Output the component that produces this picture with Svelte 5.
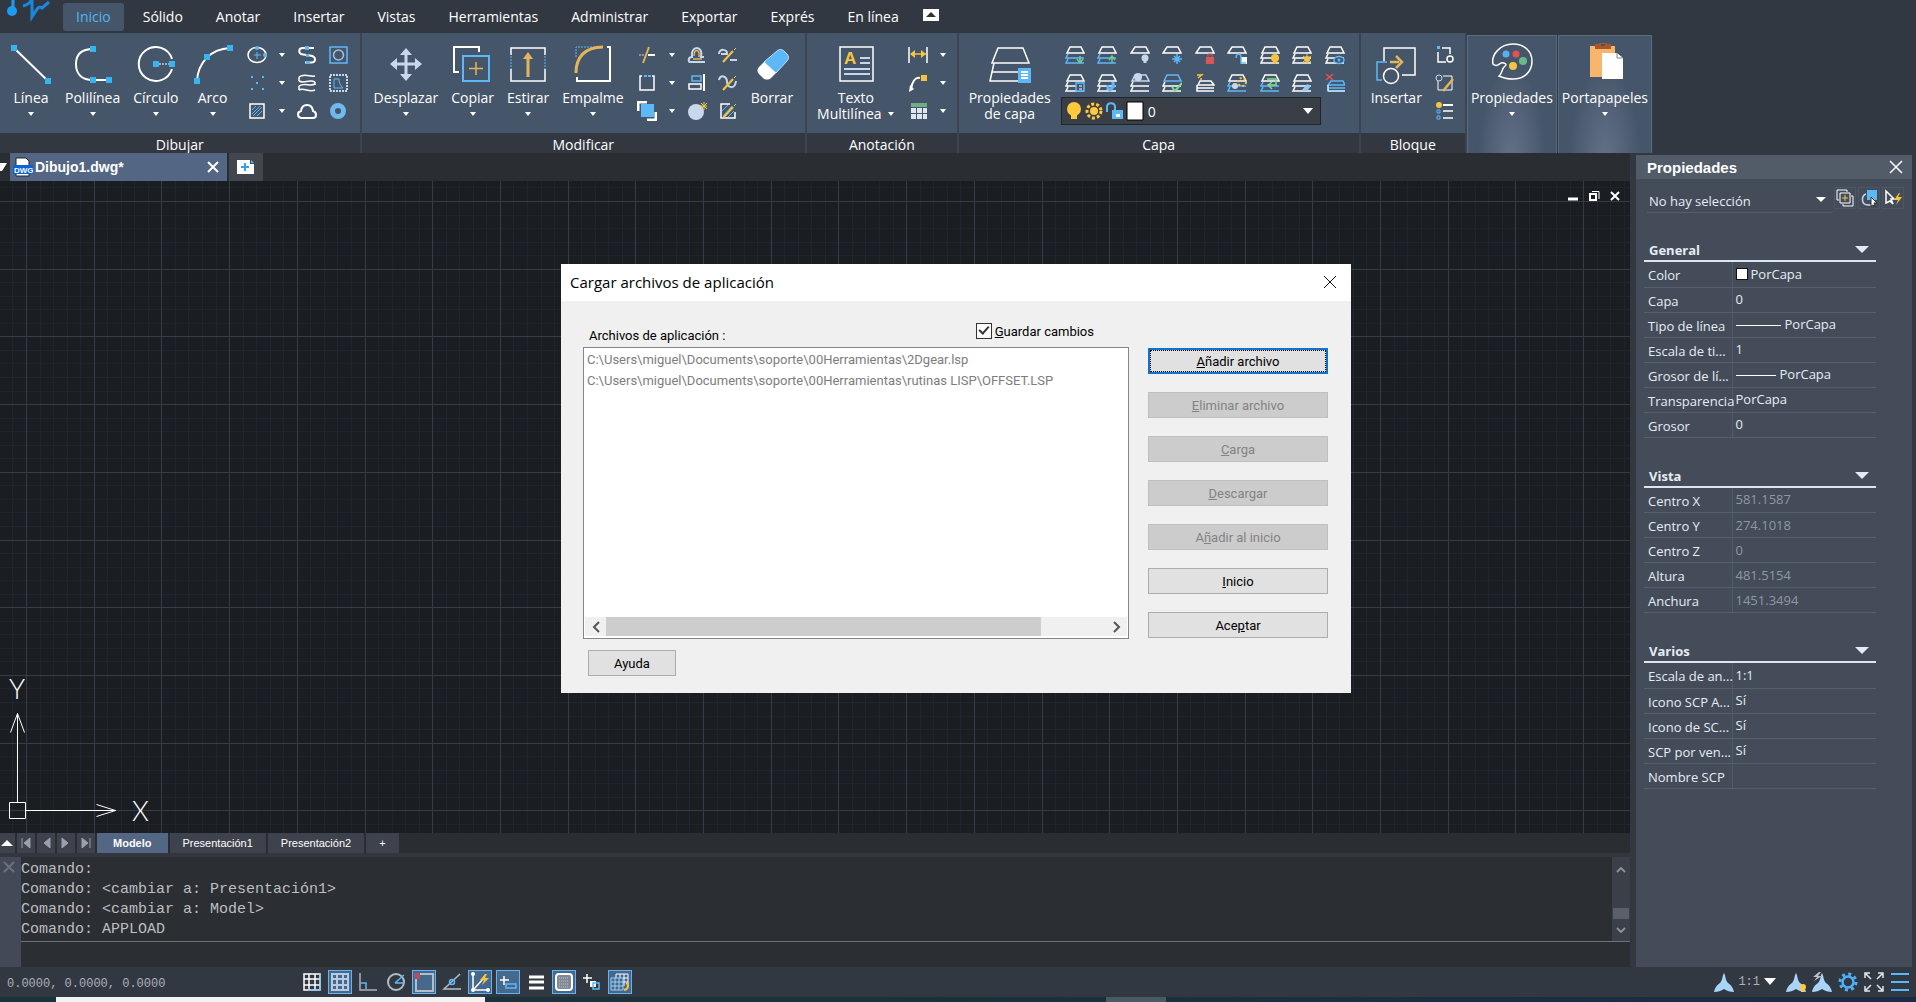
<script>
  let activeMenu = 'Inicio';
  let activeLayout = 'Modelo';
  let saveChanges = true;

  const menus = ['Inicio', 'Sólido', 'Anotar', 'Insertar', 'Vistas', 'Herramientas', 'Administrar', 'Exportar', 'Exprés', 'En línea'];

  const W = '#ffffff';
  const B = '#5db8f8';
  const Y = '#f5c542';
  const G = '#e3b45c';
  const L = '#c9d7ea';

  // large ribbon icons, 42x42
  const big = {
    line: `<path d="M4 5 38 38" stroke="${W}" stroke-width="2"/><path d="M1 2h6v6H1zM35 35h6v6h-6z" fill="#36b6f0"/>`,
    polyline: `<path d="M21 6C10 6 4 11 4 21s6 16 17 16h15" stroke="${W}" stroke-width="2"/><path d="M18 3h6v6h-6zM18 34h6v6h-6zM34 34h6v6h-6z" fill="#36b6f0"/>`,
    circle: `<path d="M37 16A17 17 0 1 0 37 26" stroke="${W}" stroke-width="2"/><path d="M24 21h10" stroke="${W}" stroke-dasharray="2 1"/><path d="M18 18h6v6h-6zM34 18h6v6h-6z" fill="#36b6f0"/>`,
    arc: `<path d="M5 38C6 20 18 6 38 5" stroke="${W}" stroke-width="2"/><path d="M2 35h6v6H2zM12 11h6v6h-6zM35 2h6v6h-6z" fill="#36b6f0"/>`,
    move: `<path d="M21 9v25M9 21h25" stroke="${L}" stroke-width="3"/><path d="m21 5 6 7H15zM21 38l6-7H15zM5 21l7-6v12zM37 21l-7-6v12z" fill="${L}"/>`,
    copy: `<path d="M7 29H2V4h25v5" stroke="${W}" stroke-width="2"/><path d="M11 13h26v25H11z" stroke="${B}" stroke-width="2"/><path d="M24 19v13M17 25.500h14" stroke="${G}" stroke-width="1.500"/>`,
    stretch: `<path d="M4 12V5h34v7M4 26v12h34V26" stroke="${W}" stroke-width="1.500"/><path d="M4 13v13M38 13v13" stroke="${B}" stroke-dasharray="2 1"/><path d="M21 34V15" stroke="${G}" stroke-width="3"/><path d="m21 9 5 7H16z" fill="${G}"/>`,
    fillet: `<path d="M35 4h3v34H5v-4" stroke="${W}" stroke-width="2"/><path d="M4 14V4h18" stroke="${B}" stroke-dasharray="2 1"/><path d="M4 30C4 15 12 4 31 4" stroke="${G}" stroke-width="3"/>`,
    erase: `<path d="M26 8c2-2 5-2 7 0l3 3c2 2 2 5 0 7L25 30 13 19z" fill="${B}" stroke="#bfe0fa"/><path d="m13 19 12 11-5 5c-2 2-6 2-8 0l-4-4c-2-2-2-5 0-7z" fill="${W}"/>`,
    mtext: `<path d="M5 4h33v34H5z" stroke="${W}" stroke-width="1.500"/><path d="M25 15h10M25 20h10M9 26h26M9 31h26" stroke="${L}" stroke-width="2"/><text x="9" y="21" font-family="Liberation Sans" font-size="17" font-weight="700" fill="${Y}">A</text>`,
    layers: `<path d="M9 5h25l6 15H3zM5 20l-2 9h28M3 29l-2 9h28" stroke="${W}" stroke-width="1.500"/><path d="M29 25h13v15H29z" fill="${B}"/><path d="M32 29h7M32 32h7M32 35h7" stroke="${W}" stroke-width="2"/>`,
    insert: `<path d="M9 18V5h31v27H27" stroke="${W}" stroke-width="1.500"/><path d="M12 19H2v18h5" stroke="${B}" stroke-width="1.500"/><path d="M15 19h9" stroke="${G}" stroke-width="2.500"/><path d="m21 13 6 6-6 6" stroke="${G}" stroke-width="2.500"/><circle cx="16" cy="33" r="7.500" stroke="${W}" stroke-width="1.500"/>`,
    palette: `<path d="M8 33c4-3 2-7 6-10 3-2-2-4-4-3-3 2-5 4-8 1C0 12 9 1 22 1c11 0 19 7 19 17 0 11-8 18-19 18-6 0-10-1-14-3z" stroke="${W}" stroke-width="1.500"/><circle cx="15" cy="11" r="3.500" fill="#59aef2"/><circle cx="25" cy="11" r="3.500" fill="#e8504f"/><circle cx="32" cy="18" r="4" fill="#68b98a"/><circle cx="22" cy="23" r="4" fill="${Y}"/>`,
    paste: `<path d="M6 3h25v31H6z" fill="#f7b66b"/><path d="M11 6V1h4v-1h8v1h4v5z" fill="#a9562a"/><path d="M17 1h4v2h-4z" fill="#46566a"/><path d="M18 10h15l6 5v21H18z" fill="${W}"/><path d="M33 10v5h6" stroke="#7a8594"/>`,
  };

  const base = (top, bottom) => `<path d="M5 2h11l3 6H2z" stroke="${top}" stroke-width="1.500"/><path d="M3 9l-2 4h18M3 14l-2 4h18" stroke="${bottom}" stroke-width="1.500"/>`;
  const single = `<path d="M5 2h11l3 6H1z" stroke="${W}" stroke-width="1.500"/>`;
  const pencil = `<path d="M5 17 15 6" stroke="${Y}" stroke-width="2"/><path d="m16 5 2-2" stroke="${Y}"/>`;

  // small ribbon icons, 20x20
  const small = {
    ellipse: `<ellipse cx="10" cy="10" rx="9" ry="7.500" stroke="${W}" stroke-width="1.500"/><path d="M10 7v7M7 10h7" stroke="${B}"/><circle cx="10" cy="3" r="2" fill="${B}"/><circle cx="18" cy="10" r="2" fill="${B}"/>`,
    spline: `<path d="M17 3H6C1 3 1 9 6 9.500l7 1c7 1 6 7 1 7H8" stroke="${W}" stroke-width="2"/><path d="M8 1h4v4H8zM9 9h3v3H9zM9 16h4v3H9z" fill="${B}"/>`,
    boundary: `<path d="M2 2h17v16H2z" stroke="${B}" stroke-width="1.500"/><circle cx="10.500" cy="10" r="5" stroke="#9cc2e2" stroke-width="1.500"/>`,
    points: `<path d="M4 3h2v2H4zM15 3h2v2h-2zM9 9h2v2H9zM4 15h2v2H4zM15 15h2v2h-2z" fill="${B}"/>`,
    bands: `<path d="M2 4c5-4 11 0 16-1M18 9C12 6 7 11 2 8M2 13c6-4 11 1 16-2M18 17C12 20 7 14 2 17M2 4v4M18 9v3M2 13v4" stroke="${W}" stroke-width="1.500"/>`,
    wipeout: `<path d="M2 2h17v16H2z" stroke="${L}" stroke-width="2" stroke-dasharray="2 1"/><path d="M6 15V6h5c0 4 1 6 4 9z" stroke="${B}"/>`,
    hatch: `<path d="M3 3h14v14H3z" stroke="${W}" stroke-width="1.500"/><path d="m5 9 4-4M5 13l8-8M6 15l9-9M10 15l5-5" stroke="${B}"/>`,
    cloud: `<path d="M4 17c-4-1-4-6 0-7 1-8 11-8 12 0 4 1 4 7 0 7z" stroke="${W}" stroke-width="2"/>`,
    donut: `<circle cx="10" cy="10" r="5.500" stroke="#6fb9ef" stroke-width="5"/>`,
    trim: `<path d="M11 10h7" stroke="${W}" stroke-width="2"/><path d="M2 10h6" stroke="${L}" stroke-dasharray="2 1"/><path d="M6 18 12 2" stroke="${G}" stroke-width="2"/>`,
    offset: `<path d="M18 17H3c-2 0-2-5 2-5C3 0 17 0 14 12h3" stroke="${L}" stroke-width="2"/><path d="M6 14h9M7 11c0-8 6-7 5 1" stroke="${G}" stroke-width="1.500"/>`,
    editPoly: `<path d="M1 9c0-6 9-5 8 0H3M12 15h7" stroke="${L}" stroke-width="2"/>${pencil}`,
    brk: `<path d="M5 3H3v14h14V3h-2" stroke="${W}" stroke-width="1.500"/><path d="M7 3h7" stroke="${B}" stroke-dasharray="3 1" stroke-width="2"/>`,
    align: `<path d="M17 1v17" stroke="${W}" stroke-width="2"/><path d="M5 3h9v5H5z" stroke="${B}" stroke-width="1.500"/><path d="M2 11h12v5H2z" stroke="${W}" stroke-width="1.500"/>`,
    editSpline: `<path d="M1 7c1-6 8-4 8 2s8 8 9-1" stroke="${L}" stroke-width="2"/>${pencil}`,
    order: `<path d="M1 10V1h9M19 11v8h-9" stroke="${W}" stroke-width="3"/><path d="M4 3h13v13H4z" fill="${B}"/>`,
    region: `<circle cx="9" cy="11" r="8" fill="${L}"/><path d="M17 1v8M13 5h7M14 2l6 6M20 2l-6 6" stroke="${Y}"/>`,
    editHatch: `<path d="M12 3H3v14h14v-6" stroke="${W}" stroke-width="1.500"/><path d="m4 10 6-6M5 15 14 5M10 16l6-6" stroke="${B}"/>${pencil}`,
    dim: `<path d="M1 2v16M19 2v16" stroke="${W}" stroke-width="1.500"/><path d="M3 9h15" stroke="${Y}" stroke-width="1.500"/><path d="m2 9 5-4v8zM18 9l-5-4v8z" fill="${Y}"/>`,
    leader: `<path d="M3 16C4 9 7 4 12 5" stroke="${W}" stroke-width="2"/><path d="m1 19 1-7 4 4z" fill="${W}"/><path d="M13 2h6v6h-6z" fill="${Y}"/>`,
    table: `<path d="M3 2h16v4H3z" fill="#6fae83"/><path d="M3 7h5v5H3zM9 7h5v5H9zM15 7h4v5h-4zM3 13h5v5H3zM9 13h5v5H9zM15 13h4v5h-4z" fill="#dfe5ee"/>`,
    blk: `<path d="M7 3h8v6M3 7v10h8" stroke="${W}" stroke-width="1.500"/><path d="M2 1h3v3H2z" fill="${B}"/><circle cx="15" cy="14" r="3" stroke="${W}" stroke-width="1.500"/>`,
    blkEdit: `<path d="M8 3h9v14H3V8" stroke="${W}"/><circle cx="4" cy="5" r="3" stroke="${L}"/><path d="M8 18 18 6" stroke="${G}" stroke-width="2.500"/>`,
    blkList: `<path d="M8 4h10" stroke="${W}" stroke-width="2"/><path d="M8 10h10M8 17h10" stroke="${W}" stroke-width="1.500"/><circle cx="4" cy="4" r="3" fill="${Y}"/><path d="M2 9h3v3H2zM2 15h3v3H2z" stroke="${B}"/>`,
  };

  const layerTools = [
    base(W, B) + `<path d="M15 11v6M12 14l3 4 3-4" stroke="#6fc98c" stroke-width="1.500"/>`,
    base(W, B) + `<path d="M15 18v-6M12 15l3-4 3 4" stroke="#6fc98c" stroke-width="1.500"/>`,
    single + `<path d="M15 10v8" stroke="${L}" stroke-width="3"/><circle cx="15" cy="13" r="3.500" fill="${L}"/>`,
    single + `<path d="M15 9v10M10 14h10M12 11l6 6M18 11l-6 6" stroke="${B}" stroke-width="1.500"/>`,
    single + `<path d="M11 12h8v7h-8z" fill="#d9575b"/><path d="M13 12V9h4v3" stroke="#d9575b"/>`,
    single + `<path d="M14 12h6v7h-6z" fill="${W}"/><path d="M9 13c0-5 5-5 5-1v6h5" stroke="${B}" stroke-width="1.500"/>`,
    base(W, W) + `<circle cx="15" cy="13" r="4" fill="${Y}"/><path d="M15 10v9" stroke="${Y}" stroke-width="3"/>`,
    base(W, W) + `<circle cx="15" cy="14" r="3" fill="${Y}"/><path d="M15 9v10M11 11l8 6M19 11l-8 6" stroke="${Y}"/>`,
    base(W, W) + `<ellipse cx="14" cy="15" rx="5" ry="3.500" fill="#46566a" stroke="${B}" stroke-width="1.500"/><circle cx="14" cy="15" r="1.500" fill="${B}"/>`,
    base(W, W) + `<path d="M11 10h8v8h-8z" fill="#46566a" stroke="${B}" stroke-width="1.500"/><path d="M14 13h3M14 16h3" stroke="${W}"/>`,
    base(W, W) + `<path d="M11 17v-5M16 15V9M12 18l6-6" stroke="${B}" stroke-width="3"/>`,
    base(L, W) + `<circle cx="8" cy="4" r="4" fill="${L}"/>`,
    base(B, W) + `<path d="m10 14 3 4 7-8" stroke="#7fdc8f" stroke-width="2"/>`,
    `<path d="M5 8h11l3 4H3zM2 12v6h17M2 15h17" stroke="${W}" stroke-width="1.500"/><path d="M2 2h5M3 5l5-4M5 6h2" stroke="${Y}" stroke-width="1.500"/>`,
    base(W, B) + `<circle cx="15" cy="9" r="4" stroke="${Y}" stroke-width="2" stroke-dasharray="2 2"/><circle cx="8" cy="13" r="3" fill="${L}"/>`,
    base(W, B) + `<path d="M7 6h9v6H9M12 9l-4 3 4 4" stroke="#7fdc8f" stroke-width="1.500"/>`,
    base(W, W) + `<path d="M10 17l5-6 4 2-4 5z" fill="#8fc6f4"/>`,
    `<path d="M6 8h12l2 4H3zM3 12v6h17M3 15h17" stroke="${B}" stroke-width="1.500"/><path d="M3 12v6h17" stroke="${W}"/><path d="M1 1l7 6M8 1 1 7" stroke="#e8504f" stroke-width="1.500"/>`,
  ];

  const drawBig = [['Línea', 'line'], ['Polilínea', 'polyline'], ['Círculo', 'circle'], ['Arco', 'arc']];
  const drawSmall = ['ellipse', '', 'spline', 'boundary', 'points', '', 'bands', 'wipeout', 'hatch', '', 'cloud', 'donut'];
  const modBig = [['Desplazar', 'move'], ['Copiar', 'copy'], ['Estirar', 'stretch'], ['Empalme', 'fillet']];
  const modSmall = ['trim', '', 'offset', 'editPoly', 'brk', '', 'align', 'editSpline', 'order', '', 'region', 'editHatch'];
  const noteSmall = ['dim', '', 'leader', '', 'table', ''];
  const blockSmall = ['blk', 'blkEdit', 'blkList'];

  const groups = [
    {
      title: 'General',
      rows: [
        ['Color', 'PorCapa', 'swatch'],
        ['Capa', '0'],
        ['Tipo de línea', 'PorCapa', 'long'],
        ['Escala de ti...', '1'],
        ['Grosor de lí...', 'PorCapa', 'short'],
        ['Transparencia', 'PorCapa'],
        ['Grosor', '0'],
      ],
    },
    {
      title: 'Vista',
      readonly: true,
      rows: [['Centro X', '581.1587'], ['Centro Y', '274.1018'], ['Centro Z', '0'], ['Altura', '481.5154'], ['Anchura', '1451.3494']],
    },
    {
      title: 'Varios',
      rows: [['Escala de an...', '1:1'], ['Icono SCP A...', 'Sí'], ['Icono de SC...', 'Sí'], ['SCP por ven...', 'Sí'], ['Nombre SCP', '']],
    },
  ];

  const layouts = ['Modelo', 'Presentación1', 'Presentación2'];
  const navIcons = ['M5 4v10M13 4 7 9l6 5z', 'M13 4 7 9l6 5z', 'M5 4l6 5-6 5z', 'M5 4l6 5-6 5zM13 4v10'];
  const history = ['Comando:', 'Comando: <cambiar a: Presentación1>', 'Comando: <cambiar a: Model>', 'Comando: APPLOAD'];

  const statusTools = [
    { on: false, svg: `<path d="M4 4h16v16H4zM9 4v16M15 4v16M4 9h16M4 15h16" stroke="${W}" stroke-width="1.500"/><path d="M20 4v16H8" stroke="${B}"/>` },
    { on: true, svg: `<path d="M4 4h16v16H4zM9 4v16M15 4v16M4 9h16M4 15h16" stroke="#b9cbe0" stroke-width="2"/>` },
    { on: false, svg: `<path d="M4 3v17h17" stroke="#a9b1bd" stroke-width="1.500"/><path d="M5 13h5v6" stroke="${B}" stroke-width="1.500"/>` },
    { on: false, svg: `<circle cx="12" cy="12" r="8" stroke="#b4bcc8" stroke-width="2"/><path d="M11 13l9-8M11 13h9" stroke="${B}" stroke-width="1.500"/>` },
    { on: true, svg: `<path d="M4 4h17v17H4z" stroke="#b6bcc6" stroke-width="2"/><path d="M2 3h6v6H2z" fill="#a9506a"/>` },
    { on: false, svg: `<path d="M20 4 4 19h17" stroke="#b4bcc8" stroke-width="1.500"/><circle cx="12" cy="12" r="2.500" stroke="${B}" stroke-width="1.500"/>` },
    { on: true, svg: `<path d="M5 4v16h15M6 19 15 9" stroke="${W}" stroke-width="1.500"/><circle cx="5" cy="4" r="2" fill="${W}"/><circle cx="5" cy="20" r="2" fill="${W}"/><circle cx="20" cy="20" r="2" fill="${W}"/><path d="m17 4-5 6h4l-2 5 7-7h-4l2-4z" fill="${Y}"/>` },
    { on: true, svg: `<path d="M8 6v9M4 10h9" stroke="${W}" stroke-width="1.500"/><path d="M10 14h10v4H10z" stroke="${B}" stroke-width="1.500"/>` },
    { on: false, svg: `<path d="M5 7h15M5 12h15M5 18h15" stroke="${W}" stroke-width="3"/>` },
    { on: true, svg: `<rect x="4" y="4" width="16" height="16" rx="3" fill="#7f8894" stroke="${W}" stroke-width="2"/><path d="M7 8h10M7 11h10M7 14h10M7 17h10" stroke="#c3cad4" stroke-dasharray="1 1"/>` },
    { on: false, svg: `<path d="M7 4v9M3 8h9" stroke="${W}" stroke-width="1.500"/><path d="M10 11h6v6h-6z" fill="${W}"/><path d="M13 13h6v6h-6z" stroke="${B}" stroke-width="1.500"/>` },
    { on: true, svg: `<path d="M8 4h12v10M12 4v4M16 4v12M8 4v4M15 8h5M15 12h5" stroke="${W}"/><path d="M3 8h12v12H3zM7 8v12M11 8v12M3 12h12M3 16h12" stroke="#9fd0f5"/><path d="M16 20c5-1 5-6 2-7" stroke="${Y}" stroke-width="2"/>` },
  ];

  const blade = 'M10 1c2 3 1 7 4 10 4 3 5 5 6 9-4 0-7-1-10-3-3 2-6 3-10 3 1-4 2-6 6-9 3-3 2-7 4-10z';

  const dialogButtons = [
    ['', 'A', 'ñadir archivo', false],
    ['', 'E', 'liminar archivo', true],
    ['', 'C', 'arga', true],
    ['', 'D', 'escargar', true],
    ['A', 'ñ', 'adir al inicio', true],
    ['', 'I', 'nicio', false],
    ['Ace', 'p', 'tar', false],
  ];

  // drawing grid: a major line every 68 px or so, five minor cells in each
  const step = 67.7;
  function gridPath(minor) {
    let d = '';
    const n = minor ? 5 : 1;
    for (let i = -2 * n; i < 60 * n; i++) {
      if (minor && i % 5 === 0) continue;
      d += `M${Math.round(26 + (i * step) / n) + 0.5} 0V3000M0 ${Math.round(20 + (i * step) / n) + 0.5}H4000`;
    }
    return d;
  }
  const major = gridPath(false);
  const minor = gridPath(true);
</script>

{#snippet caret()}
  <svg class="caret" width="8" height="6" viewBox="0 0 8 6"><path d="M1 1h6L4 5z" fill="#fff" /></svg>
{/snippet}

{#snippet tool(label, icon, drop)}
  <button class="tool">
    <svg width="42" height="42" viewBox="0 0 42 42" fill="none">{@html big[icon]}</svg>
    <span>{label}</span>
    {#if drop}{@render caret()}{/if}
  </button>
{/snippet}

{#snippet smallTools(items)}
  {#each items as name}
    {#if name}
      <button class="mini" aria-label={name}><svg width="20" height="20" viewBox="0 0 20 20" fill="none">{@html small[name]}</svg></button>
    {:else}
      <button class="drop" aria-label="más">{@render caret()}</button>
    {/if}
  {/each}
{/snippet}

<div class="app">
  <nav class="menubar">
    <svg class="logo" width="50" height="33" viewBox="0 0 50 33" fill="none">
      <circle cx="12" cy="11" r="5" fill="#1d9bf0" />
      <path d="M13 0v10" stroke="#1d9bf0" stroke-width="3" />
      <path d="M23 6c4-1 7-3 8-6M32 0v17c4-6 6-12 10-9l7-6" stroke="#1a86e0" stroke-width="3" />
    </svg>
    {#each menus as m}
      <button class="menu" class:active={m === activeMenu} on:click={() => (activeMenu = m)}>{m}</button>
    {/each}
    <button class="fold" aria-label="Contraer">
      <svg width="18" height="14" viewBox="0 0 18 14"><rect x="1" y="1" width="16" height="12" fill="#fff" /><path d="M4 9h10L9 4z" fill="#333" /></svg>
    </button>
  </nav>

  <div class="ribbon">
    <section class="panel first">
      <div class="tools">
        {#each drawBig as [label, icon]}{@render tool(label, icon, true)}{/each}
        <div class="grid four">{@render smallTools(drawSmall)}</div>
      </div>
      <h2>Dibujar</h2>
    </section>
    <section class="panel">
      <div class="tools">
        {#each modBig as [label, icon]}{@render tool(label, icon, true)}{/each}
        <div class="grid four">{@render smallTools(modSmall)}</div>
        {@render tool('Borrar', 'erase', false)}
      </div>
      <h2>Modificar</h2>
    </section>
    <section class="panel tight">
      <div class="tools">
        <button class="tool">
          <svg width="42" height="42" viewBox="0 0 42 42" fill="none">{@html big.mtext}</svg>
          <span>Texto</span>
          <span class="line2">Multilínea {@render caret()}</span>
        </button>
        <div class="grid two">{@render smallTools(noteSmall)}</div>
      </div>
      <h2>Anotación</h2>
    </section>
    <section class="panel tight layer">
      <div class="tools">
        <button class="tool">
          <svg width="42" height="42" viewBox="0 0 42 42" fill="none">{@html big.layers}</svg>
          <span>Propiedades</span>
          <span class="line2">de capa</span>
        </button>
        <div class="layerbox">
          <div class="layergrid">
            {#each layerTools as svg}
              <button class="mini" aria-label="capa"><svg width="20" height="20" viewBox="0 0 20 20" fill="none">{@html svg}</svg></button>
            {/each}
          </div>
          <label class="combo">
            <svg width="84" height="26" viewBox="0 0 84 26" fill="none">
              <circle cx="12" cy="11" r="7" fill="#ffc83d" /><path d="M9 17h6v4H9z" fill="#ffc83d" />
              <circle cx="32" cy="13" r="4" fill="#ffc83d" /><circle cx="32" cy="13" r="7" stroke="#ffc83d" stroke-width="3" stroke-dasharray="3 2" />
              <path d="M45 14V9c0-5 8-5 8 0v5" stroke="#5db8f8" stroke-width="2" /><path d="M50 12h11v9H50z" fill="#5db8f8" /><path d="M54 16h4v3h-4z" fill="#fff" />
              <path d="M65 4h16v18H65z" fill="#fff" stroke="#000" />
            </svg>
            <select aria-label="Capa actual"><option>0</option></select>
            <svg class="arrow" width="12" height="6" viewBox="0 0 12 6"><path d="M1 0h10L6 6z" fill="#fff" /></svg>
          </label>
        </div>
      </div>
      <h2>Capa</h2>
    </section>
    <section class="panel tight">
      <div class="tools">
        {@render tool('Insertar', 'insert', false)}
        <div class="grid one">{@render smallTools(blockSmall)}</div>
      </div>
      <h2>Bloque</h2>
    </section>
    <div class="folded">{@render tool('Propiedades', 'palette', true)}</div>
    <div class="folded">{@render tool('Portapapeles', 'paste', true)}</div>
  </div>

  <div class="workspace">
    <main>
      <div class="doctabs">
        <button class="doclist" aria-label="Documentos"><svg width="8" height="10" viewBox="0 0 8 10"><path d="M0 1h7L2 9H0z" fill="#fff" /></svg></button>
        <div class="doctab">
          <svg width="20" height="20" viewBox="0 0 20 20"><path d="M3 1h10l3 3v15H3z" fill="#fff" stroke="#20262e" /><rect x="0" y="8" width="20" height="9" fill="#0a63d8" /><text x="1" y="16" font-family="Liberation Sans" font-size="8" font-weight="700" fill="#fff">DWG</text></svg>
          <b>Dibujo1.dwg*</b>
          <button aria-label="Cerrar"><svg width="12" height="12" viewBox="0 0 12 12"><path d="M1 1l10 10M11 1 1 11" stroke="#fff" stroke-width="2" /></svg></button>
        </div>
        <button class="newtab" aria-label="Nuevo"><svg width="20" height="16" viewBox="0 0 20 16"><path d="M1 1h13v4h4v10H1z" fill="#fff" /><path d="M15 1l3 3h-3z" fill="#5db8f8" /><path d="M9 4v8M5 8h8" stroke="#3a9fe8" stroke-width="2" /></svg></button>
      </div>

      <div class="canvas">
        <svg class="lines" width="100%" height="100%">
          <path d={minor} stroke="#20252d" />
          <path d={major} stroke="#363c45" />
        </svg>
        <div class="winctl">
          <button aria-label="Minimizar"><svg width="12" height="12" viewBox="0 0 12 12"><path d="M1 9h10" stroke="#fff" stroke-width="3" /></svg></button>
          <button aria-label="Restaurar"><svg width="12" height="12" viewBox="0 0 12 12" fill="none"><path d="M2 4h6v6H2z" stroke="#fff" stroke-width="2" /><path d="M4 1.500h7V9" stroke="#fff" /></svg></button>
          <button aria-label="Cerrar"><svg width="12" height="12" viewBox="0 0 12 12"><path d="m2 2 8 8M10 2l-8 8" stroke="#fff" stroke-width="2" /></svg></button>
        </div>
        <svg class="ucs" width="160" height="170" viewBox="0 0 160 170" fill="none" stroke="#fff">
          <path d="M9.500 139.500h16v16h-16zM17.500 139V50M10.500 69.500l7-19 7 19M26 147.500h90M96.500 141.500l19 6-19 6" />
          <text x="9" y="36" font-family="Lato" font-weight="300" font-size="27" fill="#fff" stroke="none">Y</text>
          <text x="132" y="158" font-family="Lato" font-weight="300" font-size="27" fill="#fff" stroke="none">X</text>
        </svg>
      </div>

      <div class="layouts">
        <button class="nav up" aria-label="Subir"><svg width="15" height="18" viewBox="0 0 15 18"><path d="M1 12h12L7 6z" fill="#fff" /></svg></button>
        {#each navIcons as d}
          <button class="nav" aria-label="Desplazar"><svg width="18" height="18" viewBox="0 0 18 18"><path {d} fill="#9aa0aa" stroke="#9aa0aa" stroke-width="1" /></svg></button>
        {/each}
        {#each layouts as l}
          <button class="layout" class:active={l === activeLayout} on:click={() => (activeLayout = l)}>{l}</button>
        {/each}
        <button class="layout">+</button>
      </div>

      <div class="command">
        <div class="grip"><svg width="12" height="12" viewBox="0 0 12 12"><path d="M1 1l10 10M11 1 1 11" stroke="#6b727e" stroke-width="2" /></svg></div>
        <div class="console">
          <div class="log">
            <pre>{history.join('\n')}</pre>
            <div class="scroll">
              <svg width="10" height="6" viewBox="0 0 10 6" fill="none"><path d="M1 5l4-4 4 4" stroke="#8b919b" stroke-width="2" /></svg>
              <div class="thumb"></div>
              <svg width="10" height="6" viewBox="0 0 10 6" fill="none"><path d="M1 1l4 4 4-4" stroke="#8b919b" stroke-width="2" /></svg>
            </div>
          </div>
          <input aria-label="Línea de comandos" />
        </div>
      </div>
    </main>

    <aside>
      <header>
        <b>Propiedades</b>
        <button aria-label="Cerrar"><svg width="14" height="14" viewBox="0 0 14 14"><path d="M1 1l12 12M13 1 1 13" stroke="#fff" stroke-width="1.500" /></svg></button>
      </header>
      <div class="selection">
        <label class="picker">
          <select aria-label="Selección"><option>No hay selección</option></select>
          <svg width="10" height="6" viewBox="0 0 10 6"><path d="M0 0h10L5 5z" fill="#fff" /></svg>
        </label>
        <button aria-label="Alternar PICKADD"><svg width="20" height="20" viewBox="0 0 20 20" fill="none"><path d="M4 12H2V2h10v2M16 8h2v10H8v-2" stroke="#fff" /><path d="M5 5h10v10H5z" stroke="#fff" /><path d="M10 7v6M7 10h6" stroke="#f5c542" /></svg></button>
        <button aria-label="Seleccionar objetos"><svg width="20" height="20" viewBox="0 0 20 20" fill="none"><path d="M8 2h10v10H8z" fill="#5db8f8" /><path d="M7 6c-5 2-5 11 2 11h4" stroke="#c9d7ea" stroke-width="1.500" /><path d="m12 9 6 6h-3l1 4-2-2-2 1z" fill="#fff" stroke="#333" /></svg></button>
        <button aria-label="Selección rápida"><svg width="20" height="20" viewBox="0 0 20 20" fill="none"><path d="M3 3l8 8H8l2 5-3-3-4 2z" stroke="#fff" stroke-width="1.500" /><path d="m16 5-5 7h4l-2 5 6-8h-4l2-4z" fill="#f5c542" /></svg></button>
      </div>
      {#each groups as g}
        <section class="group">
          <h3>{g.title}<svg width="14" height="8" viewBox="0 0 14 8"><path d="M0 0h14L7 7z" fill="#e3eaf4" /></svg></h3>
          <table class:readonly={g.readonly}>
            <tbody>
              {#each g.rows as [name, value, mark]}
                <tr>
                  <th scope="row">{name}</th>
                  <td>{#if mark}<span class="mark {mark}"></span>{/if}{value}</td>
                </tr>
              {/each}
            </tbody>
          </table>
        </section>
      {/each}
    </aside>
  </div>

  <footer>
    <span class="coords">0.0000, 0.0000, 0.0000</span>
    <div class="toggles">
      {#each statusTools as t}
        <button class:on={t.on} aria-label="modo"><svg width="24" height="24" viewBox="0 0 24 24" fill="none">{@html t.svg}</svg></button>
      {/each}
    </div>
    <div class="right">
      <button class="scale">
        <svg width="20" height="20" viewBox="0 0 20 20"><path d={blade} fill="#a8d4f7" /></svg>
        <span>1:1</span>
        <svg width="12" height="8" viewBox="0 0 12 8"><path d="M0 0h12L6 7z" fill="#fff" /></svg>
      </button>
      <button aria-label="Visibilidad"><svg width="20" height="20" viewBox="0 0 20 20"><path d={blade} fill="#a8d4f7" /><circle cx="17" cy="15" r="3" fill="#ffc83d" /><path d="M15 17h3v3h-3z" fill="#ffc83d" /></svg></button>
      <button aria-label="Escala automática"><svg width="20" height="20" viewBox="0 0 20 20"><path d={blade} fill="#a8d4f7" /><path d="M7 0 1 5h4l-3 4 8-5H6l3-4z" fill="#b8bfc9" /></svg></button>
      <button aria-label="Ajustes"><svg width="20" height="20" viewBox="0 0 20 20" fill="none" stroke="#4fb0f5"><circle cx="10" cy="10" r="5.500" stroke-width="2.500" /><circle cx="10" cy="10" r="8" stroke-width="3" stroke-dasharray="3 3.280" /></svg></button>
      <button aria-label="Pantalla limpia"><svg width="20" height="20" viewBox="0 0 20 20" fill="none" stroke="#e3e8f0" stroke-width="1.500"><path d="M1 6V1h5M14 1h5v5M19 14v5h-5M6 19H1v-5M2 2l5 5M18 2l-5 5M18 18l-5-5M2 18l5-5" /></svg></button>
      <button aria-label="Menú"><svg width="20" height="20" viewBox="0 0 20 20"><path d="M1 2h18M1 10h18M1 18h18" stroke="#5db8f8" stroke-width="2" /></svg></button>
    </div>
  </footer>
  <div class="taskbar"><span class="search"></span><span class="task"></span></div>

  <div class="dialog" role="dialog" aria-label="Cargar archivos de aplicación">
    <div class="titlebar">
      <span>Cargar archivos de aplicación</span>
      <button aria-label="Cerrar"><svg width="14" height="14" viewBox="0 0 14 14"><path d="M1 1l12 12M13 1 1 13" stroke="#111" /></svg></button>
    </div>
    <div class="content">
      <div class="files">
        <div class="filehead">
          <span id="files-label">Archivos de aplicación :</span>
          <label class="save"><input type="checkbox" bind:checked={saveChanges} /><span><u>G</u>uardar cambios</span></label>
        </div>
        <div class="listbox">
          <ul aria-labelledby="files-label">
            <li>C:\Users\miguel\Documents\soporte\00Herramientas\2Dgear.lsp</li>
            <li>C:\Users\miguel\Documents\soporte\00Herramientas\rutinas LISP\OFFSET.LSP</li>
          </ul>
          <div class="hscroll">
            <button aria-label="Izquierda"><svg width="8" height="12" viewBox="0 0 8 12" fill="none"><path d="M7 1 2 6l5 5" stroke="#555" stroke-width="2" /></svg></button>
            <div class="track"><div class="hthumb"></div></div>
            <button aria-label="Derecha"><svg width="8" height="12" viewBox="0 0 8 12" fill="none"><path d="M1 1l5 5-5 5" stroke="#555" stroke-width="2" /></svg></button>
          </div>
        </div>
        <button class="win help">Ayuda</button>
      </div>
      <div class="actions">
        {#each dialogButtons as [pre, key, post, disabled], i}
          <button class="win" class:focus={i === 0} {disabled}>{pre}<u>{key}</u>{post}</button>
        {/each}
      </div>
    </div>
  </div>
</div>

<style>
  :global(body) {
    margin: 0;
    background: #323841;
  }

  .app {
    position: relative;
    display: flex;
    flex-direction: column;
    height: 100vh;
    overflow: hidden;
    background: #323841;
    color: #fff;
    font-family: "Open Sans", "Noto Sans", sans-serif;
    font-size: 14px;
  }

  button, select, input {
    font: inherit;
    color: inherit;
  }

  button {
    padding: 0;
    border: 0;
    background: none;
    white-space: nowrap;
  }

  svg {
    display: block;
    flex: none;
  }

  h2, h3, pre, ul {
    margin: 0;
    padding: 0;
  }

  .menubar {
    display: flex;
    flex: none;
    gap: 1px;
    height: 33px;
    align-items: flex-start;
  }

  .logo {
    margin-right: 12px;
  }

  .menu {
    height: 28px;
    margin-top: 3px;
    padding: 0 16px;
    line-height: 28px;
    border-radius: 3px;
  }

  .menu.active {
    padding: 0 13px;
    margin-right: 2px;
    background: #46566a;
    color: #4fb6f2;
  }

  .fold {
    margin: 8px 6px;
  }

  .ribbon {
    display: flex;
    flex: none;
    height: 120px;
  }

  .panel {
    display: flex;
    flex-direction: column;
    border-right: 2px solid #3a4453;
    background: #46566a;
  }

  .tools {
    display: flex;
    flex: 1;
    gap: 13px;
    padding: 10px 12px 0;
  }

  .first .tools {
    padding-left: 10px;
  }

  .tight .tools {
    padding: 10px 10px 0;
  }

  .layer .tools {
    gap: 10px;
  }

  .panel h2 {
    height: 20px;
    background: #323740;
    font-size: 14px;
    font-weight: 400;
    line-height: 24px;
    text-align: center;
  }

  .tool {
    display: flex;
    flex-direction: column;
    align-items: center;
    align-self: flex-start;
    line-height: 16px;
  }

  .tool > span {
    margin-top: 5px;
  }

  .tool .line2 {
    display: flex;
    align-items: center;
    gap: 5px;
    margin-top: 0;
  }

  .tool > .caret {
    margin-top: 5px;
  }

  .grid {
    display: grid;
    grid-auto-rows: 20px;
    gap: 8px 11px;
    align-content: start;
    padding-top: 2px;
  }

  .four {
    grid-template-columns: 20px 8px 20px 20px;
  }

  .two {
    grid-template-columns: 20px 8px;
  }

  .one {
    grid-template-columns: 20px;
  }

  .drop {
    display: grid;
    place-items: center;
  }

  .layergrid {
    display: grid;
    grid-template-columns: repeat(9, 20px);
    grid-auto-rows: 20px;
    justify-content: space-between;
    row-gap: 8px;
    width: 280px;
    padding: 2px 4px 4px;
  }

  .combo {
    display: flex;
    align-items: center;
    box-sizing: border-box;
    width: 260px;
    height: 28px;
    border: 1px solid #20252c;
    background: #3a3f47;
  }

  .combo select {
    flex: 1;
    min-width: 0;
    appearance: none;
    border: 0;
    padding: 0 2px;
    background: none;
  }

  .arrow {
    margin-right: 6px;
  }

  .folded {
    box-sizing: border-box;
    margin: 2px 1px 0 0;
    padding: 7px 3px 0;
    border: 1px solid #5b697c;
    border-bottom: 0;
    background: radial-gradient(ellipse at 50% 110%, #65728a 0%, #46566a 55%);
  }

  .workspace {
    display: flex;
    flex: 1;
    min-height: 0;
  }

  main {
    display: flex;
    flex: 1;
    flex-direction: column;
    min-width: 0;
  }

  .doctabs {
    display: flex;
    flex: none;
    gap: 2px;
    height: 28px;
    background: #2a2d31;
  }

  .doctab {
    display: flex;
    align-items: center;
    gap: 2px;
    box-sizing: border-box;
    width: 217px;
    padding: 0 8px 0 3px;
    background: #536683;
    font-family: "Liberation Sans", Arial, sans-serif;
    font-size: 14px;
  }

  .doctab button {
    margin-left: auto;
  }

  .newtab {
    display: grid;
    place-items: center;
    width: 34px;
    background: #42474f;
  }

  .canvas {
    position: relative;
    flex: 1;
    min-height: 0;
    background: #1a1d22;
  }

  .lines {
    position: absolute;
    inset: 0;
  }

  .winctl {
    position: absolute;
    top: 9px;
    right: 9px;
    display: flex;
    gap: 9px;
  }

  .ucs {
    position: absolute;
    bottom: 0;
    left: 0;
  }

  .layouts {
    display: flex;
    flex: none;
    gap: 2px;
    height: 20px;
    background: #2a2d31;
    border-bottom: 4px solid #32363f;
    font-family: "Liberation Sans", Arial, sans-serif;
    font-size: 11px;
  }

  .nav {
    width: 18px;
    background: #3d424c;
  }

  .up {
    width: 15px;
  }

  .layout {
    padding: 0 13px;
    background: #3d424c;
  }

  .layout.active {
    padding: 0 16px;
    background: #536683;
    font-weight: 700;
  }

  .command {
    display: flex;
    flex: none;
    height: 110px;
    background: #2b2e33;
    color: #bcbec2;
    font-family: "Liberation Mono", monospace;
    font-size: 15px;
  }

  .grip {
    width: 21px;
    padding: 4px 0 0 3px;
    box-sizing: border-box;
    background: #434957;
  }

  .console {
    display: flex;
    flex: 1;
    flex-direction: column;
  }

  .log {
    display: flex;
    justify-content: space-between;
    height: 84px;
    border-bottom: 1px solid #6c717b;
  }

  pre {
    padding-top: 3px;
    font: inherit;
    line-height: 20px;
  }

  .scroll {
    display: flex;
    flex-direction: column;
    align-items: center;
    box-sizing: border-box;
    width: 18px;
    padding: 10px 0 8px;
    background: #3b3f47;
  }

  .thumb {
    width: 16px;
    height: 11px;
    margin: auto 0 8px;
    background: #59606a;
  }

  .command input {
    flex: 1;
    border: 0;
    background: none;
  }

  aside {
    box-sizing: border-box;
    width: 276px;
    margin: 2px 4px 0 6px;
    background: #434c58;
    color: #e6ecf4;
    font-family: "Open Sans", "Noto Sans", sans-serif;
    font-size: 13px;
  }

  aside header {
    display: flex;
    align-items: center;
    justify-content: space-between;
    height: 24px;
    padding: 0 9px 0 11px;
    background: #515c68;
    color: #fff;
    font-family: "Liberation Sans", Arial, sans-serif;
    font-size: 15px;
  }

  .selection {
    display: flex;
    gap: 2px;
    height: 26px;
    padding: 8px 8px 0 11px;
  }

  .selection button {
    height: 22px;
    border: 1px solid #4d5763;
  }

  .picker {
    display: flex;
    flex: 1;
    align-items: center;
    padding-right: 6px;
    border-bottom: 1px solid #56606d;
  }

  .picker select {
    flex: 1;
    min-width: 0;
    padding: 2px 2px 0;
    appearance: none;
    border: 0;
    background: none;
  }

  .group {
    margin: 0 36px 28px 8px;
  }

  .selection + .group {
    margin-top: 27px;
  }

  h3 {
    display: flex;
    align-items: center;
    justify-content: space-between;
    height: 20px;
    padding: 0 7px 0 5px;
    border-bottom: 2px solid #dfe5ed;
    font-size: 13px;
  }

  table {
    width: 100%;
    border-collapse: collapse;
    table-layout: fixed;
  }

  tr {
    height: 25px;
  }

  th, td {
    box-sizing: border-box;
    height: 25px;
    padding: 0 0 0 5px;
    border-bottom: 1px solid #55606c;
    font-weight: 400;
    line-height: 18px;
    text-align: left;
    white-space: nowrap;
  }

  th {
    width: 88px;
    padding-top: 2px;
    padding-left: 4px;
    border-right: 1px solid #515b67;
  }

  td {
    padding-left: 3px;
    padding-bottom: 1px;
  }

  .readonly td {
    color: #8e98a5;
  }

  .mark {
    display: inline-block;
    margin-right: 4px;
    vertical-align: middle;
    border-top: 1px solid #fff;
  }

  .swatch {
    width: 10px;
    height: 10px;
    margin: 0 3px 3px 0;
    border: 1px solid #111;
    background: #fff;
  }

  .long {
    width: 45px;
  }

  .short {
    width: 40px;
  }

  footer {
    display: flex;
    flex: none;
    align-items: center;
    height: 30px;
    background: #323841;
  }

  .coords, .scale {
    font-family: "Liberation Mono", monospace;
    font-size: 12px;
    color: #aab0ba;
  }

  .coords {
    width: 293px;
    padding: 4px 0 0 7px;
  }

  .toggles {
    display: flex;
    gap: 4px;
  }

  .toggles .on {
    background: #46688c;
    outline: 1px solid #63b3ee;
    outline-offset: -1px;
  }

  .right {
    display: flex;
    align-items: center;
    gap: 6px;
    margin-left: auto;
    padding-right: 6px;
  }

  .scale {
    display: flex;
    align-items: center;
    gap: 4px;
    margin-right: 4px;
  }

  .taskbar {
    display: flex;
    flex: none;
    height: 5px;
    background: linear-gradient(90deg, #18333b, #18333b 45%, #1c2a45);
  }

  .search {
    width: 429px;
    margin-left: 56px;
    background: #f3f2f2;
  }

  .task {
    width: 60px;
    margin-left: 621px;
    background: #4a5a64;
  }

  .dialog {
    position: absolute;
    top: 264px;
    left: 561px;
    width: 790px;
    background: #f0f0f0;
    color: #000;
    font-family: Roboto, "Liberation Sans", sans-serif;
    font-size: 13px;
  }

  .titlebar {
    display: flex;
    align-items: center;
    justify-content: space-between;
    box-sizing: border-box;
    height: 37px;
    padding: 0 14px 2px 9px;
    background: #fff;
    font-family: "Open Sans", sans-serif;
    font-size: 15px;
  }

  .content {
    display: flex;
    gap: 19px;
    padding: 20px 23px 17px 22px;
  }

  .files {
    flex: 1;
    min-width: 0;
  }

  .filehead {
    display: flex;
    justify-content: space-between;
    height: 26px;
    padding: 0 35px 0 6px;
  }

  .filehead > span {
    align-self: flex-end;
    margin-bottom: 4px;
  }

  .save {
    display: flex;
    align-items: center;
    gap: 3px;
    height: 20px;
  }

  .save input {
    appearance: none;
    box-sizing: border-box;
    width: 16px;
    height: 16px;
    margin: 0;
    border: 1px solid #333;
    background: #fff;
  }

  .save input:checked::after {
    content: "";
    display: block;
    width: 4px;
    height: 8px;
    margin: 0 0 0 4px;
    border: solid #333;
    border-width: 0 2px 2px 0;
    transform: rotate(42deg);
  }

  .listbox {
    display: flex;
    flex-direction: column;
    justify-content: space-between;
    box-sizing: border-box;
    height: 292px;
    padding: 1px 1px 2px;
    border: 1px solid #82868b;
    background: #fff;
    color: #7d7d7d;
  }

  ul {
    list-style: none;
  }

  li {
    padding-left: 2px;
    line-height: 21px;
    white-space: nowrap;
  }

  .hscroll {
    display: flex;
    height: 19px;
    background: #f0f0f0;
  }

  .hscroll button {
    display: grid;
    place-items: center;
    width: 21px;
  }

  .track {
    flex: 1;
  }

  .hthumb {
    width: 87%;
    height: 100%;
    background: #cdcdcd;
  }

  .win {
    display: block;
    box-sizing: border-box;
    width: 180px;
    height: 26px;
    border: 1px solid #adadad;
    background: #e1e1e1;
  }

  .win:disabled {
    border-color: #bfbfbf;
    background: #cccccc;
    color: #838383;
  }

  .focus {
    border: 2px solid #0f73c8;
    outline: 1px dotted #000;
    outline-offset: -3px;
  }

  .help {
    width: 88px;
    margin: 11px 0 0 5px;
  }

  .actions {
    display: flex;
    flex-direction: column;
    gap: 18px;
    padding-top: 27px;
  }
</style>
